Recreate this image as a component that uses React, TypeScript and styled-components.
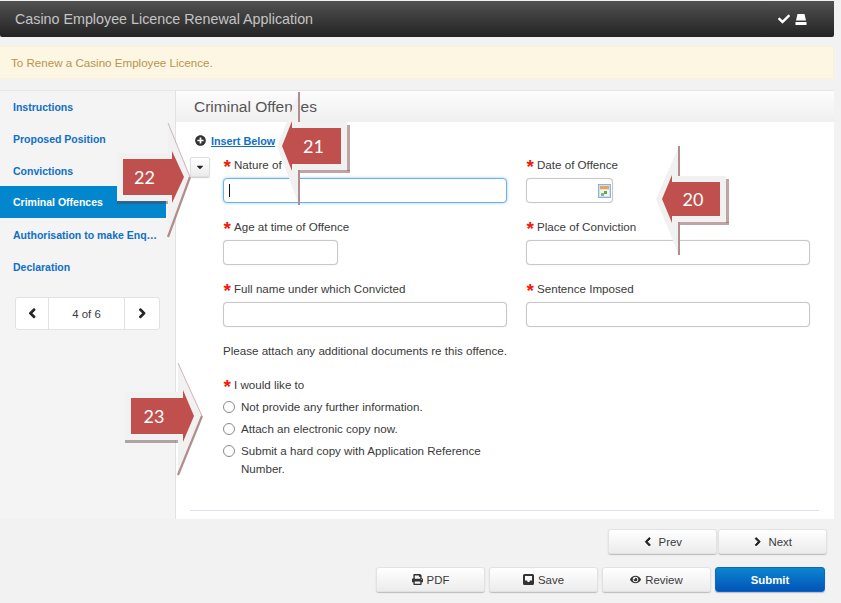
import React from 'react'
import styled, { createGlobalStyle } from 'styled-components'
import {
  FaCheck,
  FaChevronLeft,
  FaChevronRight,
  FaCaretDown,
  FaEye,
  FaPlusCircle,
  FaPrint,
} from 'react-icons/fa'

const GlobalStyle = createGlobalStyle`
  html, body {
    margin: 0;
    padding: 0;
    background: #f2f2f2;
    font-family: "Liberation Sans", Arial, sans-serif;
    color: #333;
  }
  * { box-sizing: border-box; }
`

const Page = styled.div`
  position: relative;
  width: 841px;
  height: 603px;
  overflow: hidden;
  display: flex;
  flex-direction: column;
  padding-top: 1px;
`

const Header = styled.header`
  width: 834px;
  height: 36px;
  flex: none;
  display: flex;
  align-items: center;
  justify-content: space-between;
  padding: 0 27px 0 15px;
  border-radius: 0 0 2px 2px;
  background: linear-gradient(#515151, #232323);
  color: #c4c4c4;
  font-size: 14.3px;
`

const HeaderIcons = styled.div`
  display: flex;
  align-items: center;
  gap: 5px;
  color: #fff;
  font-size: 12px;
`

const Alert = styled.div`
  width: 834px;
  height: 33px;
  flex: none;
  margin-top: 9px;
  padding-left: 11px;
  display: flex;
  align-items: center;
  background: #fcf6e2;
  border: 1px solid #faf0d8;
  border-left: 0;
  border-radius: 0 2px 2px 0;
  color: #b8954f;
  font-size: 11.6px;
`

const Main = styled.main`
  width: 834px;
  height: 428px;
  flex: none;
  margin-top: 12px;
  display: flex;
  box-shadow: 0 -1px 0 #e6e6e6;
`

const Sidebar = styled.nav`
  width: 176px;
  flex: none;
  background: #f4f4f4;
  border-right: 1px solid #e2e2e2;
`

const NavList = styled.div`
  margin-top: -1px;
`

const NavItem = styled.a<{ $active?: boolean }>`
  display: flex;
  align-items: center;
  width: 166px;
  height: 32px;
  padding-left: 13px;
  padding-top: ${(p) => (p.$active ? 0 : 1)}px;
  font-size: 10.5px;
  font-weight: bold;
  color: ${(p) => (p.$active ? '#fff' : '#0f6fc6')};
  background: ${(p) => (p.$active ? '#0286cd' : 'transparent')};
  white-space: nowrap;
`

const Pager = styled.div`
  display: flex;
  width: 145px;
  height: 33px;
  margin: 15px 0 0 15px;
  background: #fff;
  border: 1px solid #e2e2e2;
  border-radius: 3px;
`

const PagerCell = styled.div<{ $width: number; $divider?: boolean }>`
  width: ${(p) => p.$width}px;
  display: flex;
  align-items: center;
  justify-content: center;
  font-size: 11.4px;
  color: #3a3a3a;
  border-right: ${(p) => (p.$divider ? '1px solid #e2e2e2' : '0')};

  svg {
    font-size: 10.5px;
    color: #222;
    stroke: currentColor;
    stroke-width: 50;
  }
`

const Content = styled.section`
  flex: 1;
  display: flex;
  flex-direction: column;
  background: #fff;
`

const TitleBar = styled.div`
  height: 31px;
  flex: none;
  display: flex;
  align-items: center;
  padding-left: 18px;
  background: linear-gradient(#fdfdfd, #efefef);
  font-size: 15.5px;
  color: #555;
`

const FormBody = styled.div`
  flex: 1;
  padding: 11px 14px 0;
`

const InsertRow = styled.div`
  display: flex;
  align-items: center;
  gap: 5px;
  height: 15px;
  padding-left: 5px;
  font-size: 10.8px;
  color: #333;
`

const InsertLink = styled.a`
  color: #0f6fc6;
  font-weight: bold;
  text-decoration: underline;
`

const FormRow = styled.div`
  display: flex;
  align-items: flex-start;
  margin-top: 9px;
`

const CaretButton = styled.button`
  width: 20px;
  height: 20px;
  flex: none;
  margin-right: 13px;
  padding: 0;
  display: flex;
  align-items: center;
  justify-content: center;
  border: 1px solid #e0e0e0;
  border-radius: 2px;
  background: linear-gradient(#fff, #ebebeb);
  box-shadow: 0 1px 1px #ccc;
  color: #222;
  font-size: 10px;
`

const FieldGrid = styled.div`
  display: grid;
  grid-template-columns: 284px 284px;
  column-gap: 19px;
  row-gap: 12px;
`

const Field = styled.div`
  position: relative;
  height: 50px;
`

const Label = styled.label`
  display: flex;
  align-items: center;
  height: 17px;
  padding-bottom: 2px;
  margin-bottom: 4px;
  font-size: 11.6px;
  color: #3a3a3a;
`

const Star = styled.span`
  width: 10.5px;
  flex: none;
  margin-left: 0.5px;
  color: #f01a0a;
  font-size: 19px;
  font-weight: bold;
  line-height: 10px;
  padding-top: 4px;
`

const TextInput = styled.input<{ $width?: number; $focused?: boolean }>`
  display: block;
  width: ${(p) => p.$width ?? 284}px;
  height: 25px;
  padding: 0 6px;
  background: #fff;
  border: 1px solid ${(p) => (p.$focused ? '#66b3f2' : '#c8c8c8')};
  border-radius: 4px;
  box-shadow: ${(p) =>
    p.$focused ? '0 0 3px rgba(82, 168, 236, 0.6)' : '0 0 1px #ccc'};
  outline: none;
`

const TextCaret = styled.span`
  position: absolute;
  left: 6px;
  top: 27px;
  width: 1px;
  height: 13px;
  background: #111;
`

const CalendarIcon = styled.svg`
  position: absolute;
  left: 72px;
  top: 27px;
`

const Note = styled.p`
  margin: 13px 0 0 0;
  height: 14px;
  font-size: 11.6px;
  color: #3a3a3a;
`

const RadioGroup = styled.div`
  margin-top: 19px;
  width: 284px;
`

const RadioRow = styled.div<{ $height: number }>`
  display: flex;
  align-items: flex-start;
  gap: 6px;
  height: ${(p) => p.$height}px;
  font-size: 11.6px;
  line-height: 18px;
  color: #3a3a3a;
`

const RadioDot = styled.span`
  width: 12px;
  height: 12px;
  flex: none;
  margin-top: 3px;
  border: 1.5px solid #8a8a8a;
  border-radius: 50%;
  background: #fff;
`

const Divider = styled.hr`
  width: 629px;
  height: 1px;
  margin: 32px 0 0 0;
  border: 0;
  background: #dfdfe8;
`

const Footer = styled.footer`
  flex: 1;
  display: flex;
  flex-direction: column;
  align-items: flex-end;
  padding: 10px 14px 0 0;
`

const ButtonRow = styled.div<{ $offset?: number; $top?: number }>`
  display: flex;
  gap: ${(p) => (p.$offset ? 4 : 1)}px;
  margin-top: ${(p) => p.$top ?? 0}px;
  margin-right: ${(p) => p.$offset ?? 0}px;
`

const Button = styled.button<{ $primary?: boolean; $width?: number }>`
  width: ${(p) => p.$width ?? 109}px;
  height: 25px;
  padding: 0;
  display: flex;
  align-items: center;
  justify-content: center;
  gap: 4px;
  font-family: inherit;
  font-size: 11.4px;
  font-weight: ${(p) => (p.$primary ? 'bold' : 'normal')};
  color: ${(p) => (p.$primary ? '#fff' : '#3a3a3a')};
  border: 1px solid ${(p) => (p.$primary ? '#0b68c0' : '#e2e2e2')};
  border-radius: 3px;
  background: ${(p) =>
    p.$primary
      ? 'linear-gradient(#0a86d0, #0353b9)'
      : 'linear-gradient(#fff, #ececec)'};
  box-shadow: 0 1px 1px #bbb;

  svg {
    color: #333;
    font-size: 11px;
  }
`

const StepButton = styled(Button)`
  gap: 6px;

  svg {
    font-size: 9.5px;
    color: #222;
    stroke: currentColor;
    stroke-width: 50;
  }
`

const CalloutSvg = styled.svg`
  position: absolute;
  left: 0;
  top: 0;
  overflow: visible;
`

const CalloutNumber = styled.text`
  font-family: Lato, "Open Sans", sans-serif;
  font-size: 18px;
  fill: #fff;
`

type CalloutProps = {
  label: string
  dir: 'left' | 'right'
  // outer end of the tail, where the head starts, and the tip of the arrow
  tailX: number
  neckX: number
  tipX: number
  midY: number
  // half height of the tail and of the head
  tailH: number
  headH: number
  // the big pale bevel behind the arrow
  bevelX: number
  bevelTipX: number
  bevelTop: number
  bevelBottom: number
}

const Callout: React.FC<CalloutProps> = ({
  label,
  dir,
  tailX,
  neckX,
  tipX,
  midY,
  tailH,
  headH,
  bevelX,
  bevelTipX,
  bevelTop,
  bevelBottom,
}) => {
  const s = dir === 'right' ? 1 : -1
  const haloX = tailX - s * 6
  const pale = `${haloX},${midY - tailH - 6} ${bevelX},${midY - tailH - 6} ${bevelX},${bevelTop} ${bevelTipX},${midY} ${bevelX},${bevelBottom} ${bevelX},${midY + tailH + 6} ${haloX},${midY + tailH + 6}`
  const red = `${tailX},${midY - tailH} ${neckX},${midY - tailH} ${neckX},${midY - headH} ${tipX},${midY} ${neckX},${midY + headH} ${neckX},${midY + tailH} ${tailX},${midY + tailH}`
  const textX = (tailX + neckX) / 2 - 3

  return (
    <CalloutSvg width={841} height={603}>
      {dir === 'right' ? (
        <>
          <rect x={haloX} y={midY + tailH + 6} width={bevelX - haloX} height={3} fill="#5b4148" opacity={0.45} />
          <polygon points={pale} fill="#f1f1f1" />
          <line x1={bevelX} y1={bevelTop} x2={bevelTipX} y2={midY} stroke="#cdb5b5" strokeWidth={1} />
          <line x1={bevelTipX} y1={midY} x2={bevelX} y2={bevelBottom} stroke="#b18d8d" strokeWidth={2.2} />
        </>
      ) : (
        <>
          <rect x={bevelX} y={midY + tailH + 6} width={haloX - bevelX + 3} height={3} fill="#8c5a5a" opacity={0.55} />
          <rect x={haloX} y={midY - tailH - 3} width={3} height={2 * tailH + 10} fill="#8c5a5a" opacity={0.55} />
          <polygon points={pale} fill="#f1f1f1" />
          <line x1={bevelX} y1={bevelTop} x2={bevelX} y2={bevelBottom} stroke="#b18d8d" strokeWidth={2} />
          <polygon
            points={`${bevelX - 1},${midY - tailH - 6} ${haloX},${midY - tailH - 6} ${haloX},${midY + tailH + 6} ${bevelX - 1},${midY + tailH + 6}`}
            fill="#f1f1f1"
          />
        </>
      )}
      <polygon points={red} fill="#c0504d" />
      <CalloutNumber x={textX} y={midY + 6.5} textAnchor="middle">
        {label}
      </CalloutNumber>
    </CalloutSvg>
  )
}

const TrayIcon = () => (
  <svg width="12" height="11" viewBox="0 0 12 11">
    <path d="M2.5 0h7L11 6.5H1z" fill="currentColor" />
    <rect x="0.5" y="8" width="11" height="3" fill="currentColor" />
  </svg>
)

const SaveIcon = () => (
  <svg width="11" height="11" viewBox="0 0 11 11">
    <path
      d="M1.5 0h8A1.5 1.5 0 0 1 11 1.5v8A1.5 1.5 0 0 1 9.5 11h-8A1.5 1.5 0 0 1 0 9.5v-8A1.5 1.5 0 0 1 1.5 0zM2 2v4.5h2l.7 1.5h1.6L7 6.5h2V2z"
      fill="#333"
      fillRule="evenodd"
    />
  </svg>
)

const fields = [
  { label: 'Age at time of Offence', width: 115 },
  { label: 'Place of Conviction' },
  { label: 'Full name under which Convicted' },
  { label: 'Sentence Imposed' },
]

const navItems = [
  'Instructions',
  'Proposed Position',
  'Convictions',
  'Criminal Offences',
  'Authorisation to make Enq…',
  'Declaration',
]

const App: React.FC = () => {
  return (
    <Page>
      <GlobalStyle />
      <Header>
        Casino Employee Licence Renewal Application
        <HeaderIcons>
          <FaCheck />
          <TrayIcon />
        </HeaderIcons>
      </Header>

      <Alert>To Renew a Casino Employee Licence.</Alert>

      <Main>
        <Sidebar>
          <NavList>
            {navItems.map((item, i) => (
              <NavItem key={item} $active={i === 3}>
                {item}
              </NavItem>
            ))}
          </NavList>
          <Pager>
            <PagerCell $width={33} $divider>
              <FaChevronLeft />
            </PagerCell>
            <PagerCell $width={76} $divider>
              4 of 6
            </PagerCell>
            <PagerCell $width={34}>
              <FaChevronRight />
            </PagerCell>
          </Pager>
        </Sidebar>

        <Content>
          <TitleBar>Criminal Offences</TitleBar>
          <FormBody>
            <InsertRow>
              <FaPlusCircle size={11} />
              <InsertLink>Insert Below</InsertLink>
            </InsertRow>
            <FormRow>
              <CaretButton>
                <FaCaretDown />
              </CaretButton>
              <div>
                <FieldGrid>
                  <Field>
                    <Label>
                      <Star>*</Star>Nature of Offence
                    </Label>
                    <TextInput $focused />
                    <TextCaret />
                  </Field>
                  <Field>
                    <Label>
                      <Star>*</Star>Date of Offence
                    </Label>
                    <TextInput $width={87} />
                    <CalendarIcon width="13" height="14" viewBox="0 0 13 14">
                      <rect x="0.5" y="0.5" width="12" height="13" fill="#cfe0f5" stroke="#8fb0dc" />
                      <rect x="2" y="2" width="9" height="3" fill="#f2a24e" />
                      <rect x="2" y="6" width="9" height="6" fill="#f4f4ea" />
                      <rect x="6" y="7" width="3" height="3" fill="#5aa85a" />
                      <rect x="3" y="9" width="3" height="3" fill="#7fb87f" />
                    </CalendarIcon>
                  </Field>
                  {fields.map((field) => (
                    <Field key={field.label}>
                      <Label>
                        <Star>*</Star>
                        {field.label}
                      </Label>
                      <TextInput $width={field.width} />
                    </Field>
                  ))}
                </FieldGrid>
                <Note>Please attach any additional documents re this offence.</Note>
                <RadioGroup>
                  <Label>
                    <Star>*</Star>I would like to
                  </Label>
                  <RadioRow $height={22}>
                    <RadioDot />
                    Not provide any further information.
                  </RadioRow>
                  <RadioRow $height={22}>
                    <RadioDot />
                    Attach an electronic copy now.
                  </RadioRow>
                  <RadioRow $height={36}>
                    <RadioDot />
                    <span>Submit a hard copy with Application Reference Number.</span>
                  </RadioRow>
                </RadioGroup>
              </div>
            </FormRow>
            <Divider />
          </FormBody>
        </Content>
      </Main>

      <Footer>
        <ButtonRow>
          <StepButton>
            <FaChevronLeft />
            Prev
          </StepButton>
          <StepButton>
            <FaChevronRight />
            Next
          </StepButton>
        </ButtonRow>
        <ButtonRow $offset={2} $top={13}>
          <Button>
            <FaPrint />
            PDF
          </Button>
          <Button>
            <SaveIcon />
            Save
          </Button>
          <Button>
            <FaEye />
            Review
          </Button>
          <Button $primary $width={110}>
            Submit
          </Button>
        </ButtonRow>
      </Footer>

      <Callout label="20" dir="left" tailX={720} neckX={672} tipX={662} midY={199} tailH={17} headH={24} bevelX={679} bevelTipX={656} bevelTop={146} bevelBottom={255} />
      <Callout label="21" dir="left" tailX={341} neckX={292} tipX={282} midY={146} tailH={18} headH={25} bevelX={299} bevelTipX={277} bevelTop={92} bevelBottom={205} />
      <Callout label="22" dir="right" tailX={123} neckX={172} tipX={184} midY={177} tailH={18} headH={26} bevelX={168} bevelTipX={190} bevelTop={123} bevelBottom={237} />
      <Callout label="23" dir="right" tailX={131} neckX={183} tipX={194} midY={416} tailH={18} headH={26} bevelX={178} bevelTipX={202} bevelTop={363} bevelBottom={475} />
    </Page>
  )
}

export default App
